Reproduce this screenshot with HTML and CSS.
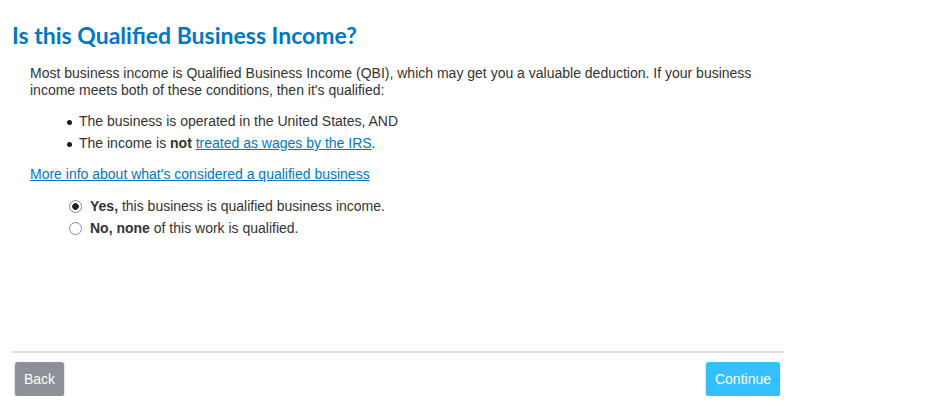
FILE: index.html
```html
<!DOCTYPE html>
<html lang="en">
<head>
  <meta charset="UTF-8" />
  <title>Qualified Business Income</title>
  <link rel="stylesheet" href="styles.css">
</head>
<body>
  <div class="page">
    <h1 class="title">Is this Qualified Business Income?</h1>

    <div class="content">
      <p class="intro">Most business income is Qualified Business Income (QBI), which may get you a valuable deduction. If your business income meets both of these conditions, then it's qualified:</p>

      <ul class="conditions">
        <li>The business is operated in the United States, AND</li>
        <li>The income is <b>not</b> <a href="#">treated as wages by the IRS</a>.</li>
      </ul>

      <a class="more-info" href="#">More info about what's considered a qualified business</a>

      <div class="choices">
        <label class="choice">
          <input type="radio" name="qbi" checked />
          <span><b>Yes,</b> this business is qualified business income.</span>
        </label>
        <label class="choice">
          <input type="radio" name="qbi" />
          <span><b>No, none</b> of this work is qualified.</span>
        </label>
      </div>
    </div>

    <div class="footer">
      <button class="btn btn-back">Back</button>
      <button class="btn btn-continue">Continue</button>
    </div>
  </div>
</body>
</html>
```

FILE: styles.css
```css
body {
  margin: 0;
  font-family: 'Liberation Sans', Arial, sans-serif;
  background: #fff;
  color: #333;
}

.page {
  width: 772px;
  margin-left: 12px;
}

.title {
  margin: 0;
  padding-top: 21px;
  font-family: 'Lato', sans-serif;
  font-size: 23px;
  font-weight: 700;
  color: #0077c5;
  line-height: 28px;
}

.content {
  padding: 16px 0 0 18px;
  height: 286px;
  font-size: 14px;
  line-height: 17px;
}

.intro {
  margin: 0;
}

.conditions {
  margin: 14px 0 0 0;
  padding-left: 49px;
  list-style: none;
}

.conditions li {
  margin-bottom: 5px;
}

.conditions li::before {
  content: '';
  display: inline-block;
  width: 5px;
  height: 5px;
  border-radius: 50%;
  background: #1a1a1a;
  margin: 0 7px 0 -12px;
  vertical-align: middle;
}

a {
  color: #0077c5;
}

.more-info {
  display: inline-block;
  margin-top: 9px;
}

.choices {
  margin-top: 15px;
  padding-left: 39px;
}

.choice {
  display: flex;
  align-items: center;
  gap: 8px;
  margin-bottom: 5px;
}

.choice input {
  appearance: none;
  margin: 0;
  width: 13px;
  height: 13px;
  border: 1px solid #8a8a8a;
  border-radius: 50%;
  background: #fff;
}

.choice input:checked {
  background: radial-gradient(circle, #222 0, #222 3px, #fff 3.6px);
}

.footer {
  border-top: 2px solid #e0e0e0;
  padding: 9px 4px 0 3px;
  display: flex;
  justify-content: space-between;
}

.btn {
  border: none;
  border-radius: 3px;
  color: #fff;
  font-family: 'Liberation Sans', Arial, sans-serif;
  font-size: 14px;
  height: 34px;
  padding: 0 9px;
  box-shadow: 0 1px 2px rgba(0, 0, 0, 0.35);
  cursor: pointer;
}

.btn-back {
  background: #8d9096;
}

.btn-continue {
  background: #34bfff;
}
```
